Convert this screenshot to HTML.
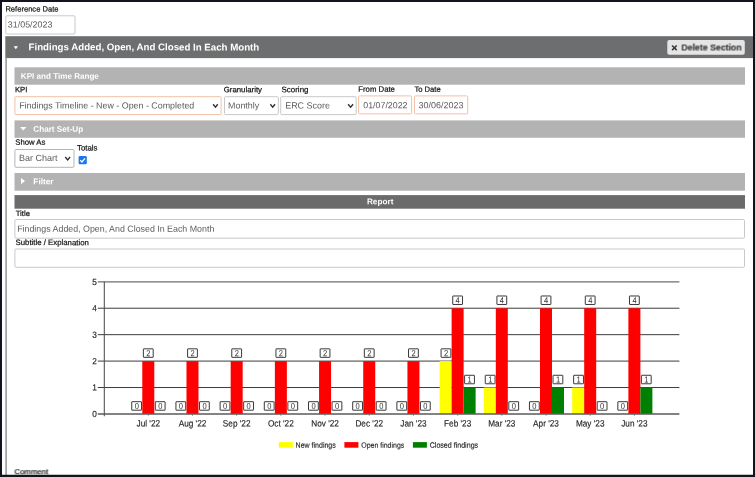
<!DOCTYPE html>
<html><head><meta charset="utf-8"><title>Report</title>
<style>
html,body{margin:0;padding:0;}
body{width:755px;height:477px;overflow:hidden;background:#fff;position:relative;font-family:"Liberation Sans",sans-serif;}
svg{position:absolute;left:0;top:0;display:block}
</style></head><body>
<svg width="755" height="477" viewBox="0 0 755 477" font-family="Liberation Sans, sans-serif">
<defs><filter id="gf" x="0" y="0" width="755" height="477" filterUnits="userSpaceOnUse" color-interpolation-filters="sRGB"><feColorMatrix type="matrix" values="1 0 0 0 0 0 1 0 0 0 0 0 1 0 0 0 0 0 1 0"/></filter></defs>
<rect x="5.80" y="15.80" width="69.20" height="18.20" fill="#fff" stroke="#c9c9c9" stroke-width="1.0" rx="1.0"/>
<rect x="5.30" y="36.20" width="748.20" height="21.90" fill="#6d6e6f"/>
<rect x="5.30" y="57.50" width="1.60" height="419.50" fill="#9a9a9a"/>
<path d="M13.70 46.20H18.00L15.85 49.20Z" fill="#fff"/>
<rect x="667.30" y="40.00" width="77.50" height="14.80" fill="#e5e5e5" rx="2"/>
<path d="M672.1 45.5L676.7 50.1M676.7 45.5L672.1 50.1" stroke="#3a3a3a" stroke-width="1.6"/>
<rect x="14.50" y="67.30" width="730.50" height="17.40" fill="#b3b3b3"/>
<rect x="14.90" y="96.70" width="206.20" height="17.90" fill="#fff" stroke="#f3c0a6" stroke-width="1.0" rx="1.0"/>
<path d="M213.15 104.30L215.45 107.15L217.75 104.30" stroke="#303030" stroke-width="1.38" fill="none"/>
<rect x="224.50" y="96.70" width="53.80" height="17.90" fill="#fff" stroke="#c9c9c9" stroke-width="1.0" rx="1.0"/>
<path d="M270.35 104.30L272.70 107.15L275.05 104.30" stroke="#303030" stroke-width="1.38" fill="none"/>
<rect x="280.70" y="96.70" width="75.50" height="17.90" fill="#fff" stroke="#c9c9c9" stroke-width="1.0" rx="1.0"/>
<path d="M348.15 104.30L350.60 107.15L353.05 104.30" stroke="#303030" stroke-width="1.38" fill="none"/>
<rect x="358.60" y="95.90" width="53.00" height="18.00" fill="#fff" stroke="#f3c0a6" stroke-width="1.0" rx="1.0"/>
<rect x="414.50" y="95.90" width="53.20" height="18.00" fill="#fff" stroke="#f3c0a6" stroke-width="1.0" rx="1.0"/>
<rect x="14.50" y="120.40" width="730.50" height="17.40" fill="#b3b3b3"/>
<path d="M20.10 127.00H26.40L23.25 130.40Z" fill="#fff"/>
<rect x="14.90" y="149.50" width="59.10" height="17.80" fill="#fff" stroke="#b5b5b5" stroke-width="1.0" rx="1.0"/>
<path d="M65.25 157.00L67.65 159.85L70.05 157.00" stroke="#303030" stroke-width="1.38" fill="none"/>
<rect x="78.6" y="156.1" width="8.2" height="8.2" rx="1.3" fill="#1a77ee"/><path d="M80.3 160.3L81.95 161.95L85.0 158.3" stroke="#fff" stroke-width="1.3" fill="none"/>
<rect x="14.50" y="173.00" width="730.50" height="17.70" fill="#b3b3b3"/>
<path d="M21.00 178.00L25.00 181.10L21.00 184.20Z" fill="#fff"/>
<rect x="14.50" y="195.10" width="730.50" height="13.60" fill="#6b6b6b"/>
<rect x="14.90" y="219.50" width="729.60" height="18.70" fill="#fff" stroke="#c9c9c9" stroke-width="1.0" rx="1.0"/>
<rect x="14.90" y="249.00" width="729.60" height="18.30" fill="#fff" stroke="#c9c9c9" stroke-width="1.0" rx="1.0"/>
<g filter="url(#gf)">
<line x1="97.8" y1="387.52" x2="679.40" y2="387.52" stroke="#262626" stroke-width="0.9"/>
<line x1="97.8" y1="361.09" x2="679.40" y2="361.09" stroke="#262626" stroke-width="0.9"/>
<line x1="97.8" y1="334.66" x2="679.40" y2="334.66" stroke="#262626" stroke-width="0.9"/>
<line x1="97.8" y1="308.23" x2="679.40" y2="308.23" stroke="#262626" stroke-width="0.9"/>
<line x1="97.8" y1="281.80" x2="679.40" y2="281.80" stroke="#6e6e6e" stroke-width="1.3"/>
<rect x="131.74" y="401.70" width="9.8" height="8.5" rx="0.3" fill="#fff" stroke="#2e2e2e" stroke-width="0.95"/><text transform="matrix(0.87,0.0005,0,1,136.74,409.05)" font-size="8.7" text-anchor="middle" fill="#333">0</text>
<rect x="155.29" y="401.70" width="9.8" height="8.5" rx="0.3" fill="#fff" stroke="#2e2e2e" stroke-width="0.95"/><text transform="matrix(0.87,0.0005,0,1,160.29,409.05)" font-size="8.7" text-anchor="middle" fill="#333">0</text>
<rect x="175.93" y="401.70" width="9.8" height="8.5" rx="0.3" fill="#fff" stroke="#2e2e2e" stroke-width="0.95"/><text transform="matrix(0.87,0.0005,0,1,180.93,409.05)" font-size="8.7" text-anchor="middle" fill="#333">0</text>
<rect x="199.48" y="401.70" width="9.8" height="8.5" rx="0.3" fill="#fff" stroke="#2e2e2e" stroke-width="0.95"/><text transform="matrix(0.87,0.0005,0,1,204.48,409.05)" font-size="8.7" text-anchor="middle" fill="#333">0</text>
<rect x="220.12" y="401.70" width="9.8" height="8.5" rx="0.3" fill="#fff" stroke="#2e2e2e" stroke-width="0.95"/><text transform="matrix(0.87,0.0005,0,1,225.12,409.05)" font-size="8.7" text-anchor="middle" fill="#333">0</text>
<rect x="243.67" y="401.70" width="9.8" height="8.5" rx="0.3" fill="#fff" stroke="#2e2e2e" stroke-width="0.95"/><text transform="matrix(0.87,0.0005,0,1,248.67,409.05)" font-size="8.7" text-anchor="middle" fill="#333">0</text>
<rect x="264.31" y="401.70" width="9.8" height="8.5" rx="0.3" fill="#fff" stroke="#2e2e2e" stroke-width="0.95"/><text transform="matrix(0.87,0.0005,0,1,269.31,409.05)" font-size="8.7" text-anchor="middle" fill="#333">0</text>
<rect x="287.86" y="401.70" width="9.8" height="8.5" rx="0.3" fill="#fff" stroke="#2e2e2e" stroke-width="0.95"/><text transform="matrix(0.87,0.0005,0,1,292.86,409.05)" font-size="8.7" text-anchor="middle" fill="#333">0</text>
<rect x="308.50" y="401.70" width="9.8" height="8.5" rx="0.3" fill="#fff" stroke="#2e2e2e" stroke-width="0.95"/><text transform="matrix(0.87,0.0005,0,1,313.50,409.05)" font-size="8.7" text-anchor="middle" fill="#333">0</text>
<rect x="332.05" y="401.70" width="9.8" height="8.5" rx="0.3" fill="#fff" stroke="#2e2e2e" stroke-width="0.95"/><text transform="matrix(0.87,0.0005,0,1,337.05,409.05)" font-size="8.7" text-anchor="middle" fill="#333">0</text>
<rect x="352.69" y="401.70" width="9.8" height="8.5" rx="0.3" fill="#fff" stroke="#2e2e2e" stroke-width="0.95"/><text transform="matrix(0.87,0.0005,0,1,357.69,409.05)" font-size="8.7" text-anchor="middle" fill="#333">0</text>
<rect x="376.24" y="401.70" width="9.8" height="8.5" rx="0.3" fill="#fff" stroke="#2e2e2e" stroke-width="0.95"/><text transform="matrix(0.87,0.0005,0,1,381.24,409.05)" font-size="8.7" text-anchor="middle" fill="#333">0</text>
<rect x="396.88" y="401.70" width="9.8" height="8.5" rx="0.3" fill="#fff" stroke="#2e2e2e" stroke-width="0.95"/><text transform="matrix(0.87,0.0005,0,1,401.88,409.05)" font-size="8.7" text-anchor="middle" fill="#333">0</text>
<rect x="420.43" y="401.70" width="9.8" height="8.5" rx="0.3" fill="#fff" stroke="#2e2e2e" stroke-width="0.95"/><text transform="matrix(0.87,0.0005,0,1,425.43,409.05)" font-size="8.7" text-anchor="middle" fill="#333">0</text>
<rect x="441.07" y="348.84" width="9.8" height="8.5" rx="0.3" fill="#fff" stroke="#2e2e2e" stroke-width="0.95"/><text transform="matrix(0.87,0.0005,0,1,446.07,356.19)" font-size="8.7" text-anchor="middle" fill="#333">2</text>
<rect x="464.62" y="375.27" width="9.8" height="8.5" rx="0.3" fill="#fff" stroke="#2e2e2e" stroke-width="0.95"/><text transform="matrix(0.87,0.0005,0,1,469.62,382.62)" font-size="8.7" text-anchor="middle" fill="#333">1</text>
<rect x="485.26" y="375.27" width="9.8" height="8.5" rx="0.3" fill="#fff" stroke="#2e2e2e" stroke-width="0.95"/><text transform="matrix(0.87,0.0005,0,1,490.26,382.62)" font-size="8.7" text-anchor="middle" fill="#333">1</text>
<rect x="508.81" y="401.70" width="9.8" height="8.5" rx="0.3" fill="#fff" stroke="#2e2e2e" stroke-width="0.95"/><text transform="matrix(0.87,0.0005,0,1,513.81,409.05)" font-size="8.7" text-anchor="middle" fill="#333">0</text>
<rect x="529.45" y="401.70" width="9.8" height="8.5" rx="0.3" fill="#fff" stroke="#2e2e2e" stroke-width="0.95"/><text transform="matrix(0.87,0.0005,0,1,534.45,409.05)" font-size="8.7" text-anchor="middle" fill="#333">0</text>
<rect x="553.00" y="375.27" width="9.8" height="8.5" rx="0.3" fill="#fff" stroke="#2e2e2e" stroke-width="0.95"/><text transform="matrix(0.87,0.0005,0,1,558.00,382.62)" font-size="8.7" text-anchor="middle" fill="#333">1</text>
<rect x="573.64" y="375.27" width="9.8" height="8.5" rx="0.3" fill="#fff" stroke="#2e2e2e" stroke-width="0.95"/><text transform="matrix(0.87,0.0005,0,1,578.64,382.62)" font-size="8.7" text-anchor="middle" fill="#333">1</text>
<rect x="597.19" y="401.70" width="9.8" height="8.5" rx="0.3" fill="#fff" stroke="#2e2e2e" stroke-width="0.95"/><text transform="matrix(0.87,0.0005,0,1,602.19,409.05)" font-size="8.7" text-anchor="middle" fill="#333">0</text>
<rect x="617.83" y="401.70" width="9.8" height="8.5" rx="0.3" fill="#fff" stroke="#2e2e2e" stroke-width="0.95"/><text transform="matrix(0.87,0.0005,0,1,622.83,409.05)" font-size="8.7" text-anchor="middle" fill="#333">0</text>
<rect x="641.38" y="375.27" width="9.8" height="8.5" rx="0.3" fill="#fff" stroke="#2e2e2e" stroke-width="0.95"/><text transform="matrix(0.87,0.0005,0,1,646.38,382.62)" font-size="8.7" text-anchor="middle" fill="#333">1</text>
<rect x="142.29" y="361.09" width="12.0" height="52.86" fill="#ff0000"/>
<rect x="186.48" y="361.09" width="12.0" height="52.86" fill="#ff0000"/>
<rect x="230.67" y="361.09" width="12.0" height="52.86" fill="#ff0000"/>
<rect x="274.86" y="361.09" width="12.0" height="52.86" fill="#ff0000"/>
<rect x="319.05" y="361.09" width="12.0" height="52.86" fill="#ff0000"/>
<rect x="363.24" y="361.09" width="12.0" height="52.86" fill="#ff0000"/>
<rect x="407.43" y="361.09" width="12.0" height="52.86" fill="#ff0000"/>
<rect x="439.62" y="361.09" width="12.0" height="52.86" fill="#ffff00"/>
<rect x="451.62" y="308.23" width="12.0" height="105.72" fill="#ff0000"/>
<rect x="463.62" y="387.52" width="12.0" height="26.43" fill="#008000"/>
<rect x="483.81" y="387.52" width="12.0" height="26.43" fill="#ffff00"/>
<rect x="495.81" y="308.23" width="12.0" height="105.72" fill="#ff0000"/>
<rect x="540.00" y="308.23" width="12.0" height="105.72" fill="#ff0000"/>
<rect x="552.00" y="387.52" width="12.0" height="26.43" fill="#008000"/>
<rect x="572.19" y="387.52" width="12.0" height="26.43" fill="#ffff00"/>
<rect x="584.19" y="308.23" width="12.0" height="105.72" fill="#ff0000"/>
<rect x="628.38" y="308.23" width="12.0" height="105.72" fill="#ff0000"/>
<rect x="640.38" y="387.52" width="12.0" height="26.43" fill="#008000"/>
<rect x="143.39" y="348.84" width="9.8" height="8.5" rx="0.3" fill="#fff" stroke="#2e2e2e" stroke-width="0.95"/><text transform="matrix(0.87,0.0005,0,1,148.39,356.19)" font-size="8.7" text-anchor="middle" fill="#333">2</text>
<rect x="187.58" y="348.84" width="9.8" height="8.5" rx="0.3" fill="#fff" stroke="#2e2e2e" stroke-width="0.95"/><text transform="matrix(0.87,0.0005,0,1,192.58,356.19)" font-size="8.7" text-anchor="middle" fill="#333">2</text>
<rect x="231.77" y="348.84" width="9.8" height="8.5" rx="0.3" fill="#fff" stroke="#2e2e2e" stroke-width="0.95"/><text transform="matrix(0.87,0.0005,0,1,236.77,356.19)" font-size="8.7" text-anchor="middle" fill="#333">2</text>
<rect x="275.96" y="348.84" width="9.8" height="8.5" rx="0.3" fill="#fff" stroke="#2e2e2e" stroke-width="0.95"/><text transform="matrix(0.87,0.0005,0,1,280.96,356.19)" font-size="8.7" text-anchor="middle" fill="#333">2</text>
<rect x="320.15" y="348.84" width="9.8" height="8.5" rx="0.3" fill="#fff" stroke="#2e2e2e" stroke-width="0.95"/><text transform="matrix(0.87,0.0005,0,1,325.15,356.19)" font-size="8.7" text-anchor="middle" fill="#333">2</text>
<rect x="364.34" y="348.84" width="9.8" height="8.5" rx="0.3" fill="#fff" stroke="#2e2e2e" stroke-width="0.95"/><text transform="matrix(0.87,0.0005,0,1,369.34,356.19)" font-size="8.7" text-anchor="middle" fill="#333">2</text>
<rect x="408.53" y="348.84" width="9.8" height="8.5" rx="0.3" fill="#fff" stroke="#2e2e2e" stroke-width="0.95"/><text transform="matrix(0.87,0.0005,0,1,413.53,356.19)" font-size="8.7" text-anchor="middle" fill="#333">2</text>
<rect x="452.72" y="295.98" width="9.8" height="8.5" rx="0.3" fill="#fff" stroke="#2e2e2e" stroke-width="0.95"/><text transform="matrix(0.87,0.0005,0,1,457.72,303.33)" font-size="8.7" text-anchor="middle" fill="#333">4</text>
<rect x="496.91" y="295.98" width="9.8" height="8.5" rx="0.3" fill="#fff" stroke="#2e2e2e" stroke-width="0.95"/><text transform="matrix(0.87,0.0005,0,1,501.91,303.33)" font-size="8.7" text-anchor="middle" fill="#333">4</text>
<rect x="541.10" y="295.98" width="9.8" height="8.5" rx="0.3" fill="#fff" stroke="#2e2e2e" stroke-width="0.95"/><text transform="matrix(0.87,0.0005,0,1,546.10,303.33)" font-size="8.7" text-anchor="middle" fill="#333">4</text>
<rect x="585.29" y="295.98" width="9.8" height="8.5" rx="0.3" fill="#fff" stroke="#2e2e2e" stroke-width="0.95"/><text transform="matrix(0.87,0.0005,0,1,590.29,303.33)" font-size="8.7" text-anchor="middle" fill="#333">4</text>
<rect x="629.48" y="295.98" width="9.8" height="8.5" rx="0.3" fill="#fff" stroke="#2e2e2e" stroke-width="0.95"/><text transform="matrix(0.87,0.0005,0,1,634.48,303.33)" font-size="8.7" text-anchor="middle" fill="#333">4</text>
<line x1="104.3" y1="281.80" x2="104.3" y2="416.34999999999997" stroke="#4c4c4c" stroke-width="1.05"/>
<line x1="97.8" y1="413.95" x2="679.40" y2="413.95" stroke="#5a5a5a" stroke-width="1.4"/>
<line x1="148.29" y1="413.95" x2="148.29" y2="415.84999999999997" stroke="#777" stroke-width="0.8"/>
<text transform="matrix(0.90,0.0005,0,1,148.29,426.45)" font-size="9.16" text-anchor="middle" fill="#242424" stroke="#242424" stroke-width="0.15">Jul '22</text>
<line x1="192.48" y1="413.95" x2="192.48" y2="415.84999999999997" stroke="#777" stroke-width="0.8"/>
<text transform="matrix(0.90,0.0005,0,1,192.48,426.45)" font-size="9.16" text-anchor="middle" fill="#242424" stroke="#242424" stroke-width="0.15">Aug '22</text>
<line x1="236.67" y1="413.95" x2="236.67" y2="415.84999999999997" stroke="#777" stroke-width="0.8"/>
<text transform="matrix(0.90,0.0005,0,1,236.67,426.45)" font-size="9.16" text-anchor="middle" fill="#242424" stroke="#242424" stroke-width="0.15">Sep '22</text>
<line x1="280.86" y1="413.95" x2="280.86" y2="415.84999999999997" stroke="#777" stroke-width="0.8"/>
<text transform="matrix(0.90,0.0005,0,1,280.86,426.45)" font-size="9.16" text-anchor="middle" fill="#242424" stroke="#242424" stroke-width="0.15">Oct '22</text>
<line x1="325.05" y1="413.95" x2="325.05" y2="415.84999999999997" stroke="#777" stroke-width="0.8"/>
<text transform="matrix(0.90,0.0005,0,1,325.05,426.45)" font-size="9.16" text-anchor="middle" fill="#242424" stroke="#242424" stroke-width="0.15">Nov '22</text>
<line x1="369.24" y1="413.95" x2="369.24" y2="415.84999999999997" stroke="#777" stroke-width="0.8"/>
<text transform="matrix(0.90,0.0005,0,1,369.24,426.45)" font-size="9.16" text-anchor="middle" fill="#242424" stroke="#242424" stroke-width="0.15">Dec '22</text>
<line x1="413.43" y1="413.95" x2="413.43" y2="415.84999999999997" stroke="#777" stroke-width="0.8"/>
<text transform="matrix(0.90,0.0005,0,1,413.43,426.45)" font-size="9.16" text-anchor="middle" fill="#242424" stroke="#242424" stroke-width="0.15">Jan '23</text>
<line x1="457.62" y1="413.95" x2="457.62" y2="415.84999999999997" stroke="#777" stroke-width="0.8"/>
<text transform="matrix(0.90,0.0005,0,1,457.62,426.45)" font-size="9.16" text-anchor="middle" fill="#242424" stroke="#242424" stroke-width="0.15">Feb '23</text>
<line x1="501.81" y1="413.95" x2="501.81" y2="415.84999999999997" stroke="#777" stroke-width="0.8"/>
<text transform="matrix(0.90,0.0005,0,1,501.81,426.45)" font-size="9.16" text-anchor="middle" fill="#242424" stroke="#242424" stroke-width="0.15">Mar '23</text>
<line x1="546.00" y1="413.95" x2="546.00" y2="415.84999999999997" stroke="#777" stroke-width="0.8"/>
<text transform="matrix(0.90,0.0005,0,1,546.00,426.45)" font-size="9.16" text-anchor="middle" fill="#242424" stroke="#242424" stroke-width="0.15">Apr '23</text>
<line x1="590.19" y1="413.95" x2="590.19" y2="415.84999999999997" stroke="#777" stroke-width="0.8"/>
<text transform="matrix(0.90,0.0005,0,1,590.19,426.45)" font-size="9.16" text-anchor="middle" fill="#242424" stroke="#242424" stroke-width="0.15">May '23</text>
<line x1="634.38" y1="413.95" x2="634.38" y2="415.84999999999997" stroke="#777" stroke-width="0.8"/>
<text transform="matrix(0.90,0.0005,0,1,634.38,426.45)" font-size="9.16" text-anchor="middle" fill="#242424" stroke="#242424" stroke-width="0.15">Jun '23</text>
<text transform="matrix(0.93,0.0005,0,1,96.8,417.05)" font-size="8.9" text-anchor="end" fill="#262626" stroke="#262626" stroke-width="0.15">0</text>
<text transform="matrix(0.93,0.0005,0,1,96.8,390.62)" font-size="8.9" text-anchor="end" fill="#262626" stroke="#262626" stroke-width="0.15">1</text>
<text transform="matrix(0.93,0.0005,0,1,96.8,364.19)" font-size="8.9" text-anchor="end" fill="#262626" stroke="#262626" stroke-width="0.15">2</text>
<text transform="matrix(0.93,0.0005,0,1,96.8,337.76)" font-size="8.9" text-anchor="end" fill="#262626" stroke="#262626" stroke-width="0.15">3</text>
<text transform="matrix(0.93,0.0005,0,1,96.8,311.33)" font-size="8.9" text-anchor="end" fill="#262626" stroke="#262626" stroke-width="0.15">4</text>
<text transform="matrix(0.93,0.0005,0,1,96.8,284.90)" font-size="8.9" text-anchor="end" fill="#262626" stroke="#262626" stroke-width="0.15">5</text>
<rect x="278.8" y="442.1" width="14.0" height="5.6" fill="#ffff00"/>
<text transform="matrix(0.91,0.0005,0,1,295.6,447.7)" font-size="7.73" fill="#242424" stroke="#242424" stroke-width="0.15">New findings</text>
<rect x="344.4" y="442.1" width="14.0" height="5.6" fill="#ff0000"/>
<text transform="matrix(0.91,0.0005,0,1,361.2,447.7)" font-size="7.67" fill="#242424" stroke="#242424" stroke-width="0.15">Open findings</text>
<rect x="412.9" y="442.1" width="14.0" height="5.6" fill="#008000"/>
<text transform="matrix(0.91,0.0005,0,1,429.7,447.7)" font-size="7.80" fill="#242424" stroke="#242424" stroke-width="0.15">Closed findings</text>
<text transform="matrix(1.0000,0.0005,0,1,5.38,11.60)" font-size="7.59" fill="#141414" stroke="#141414" stroke-width="0.22">Reference Date</text>
<text transform="matrix(1.0000,0.0005,0,1,7.86,27.40)" font-size="8.9" fill="#5c5c5c">31/05/2023</text>
<text transform="matrix(1.0000,0.0005,0,1,28.55,50.30)" font-size="9.69" font-weight="bold" fill="#fff">Findings Added, Open, And Closed In Each Month</text>
<text transform="matrix(1.0000,0.0005,0,1,681.41,50.50)" font-size="8.75" font-weight="bold" fill="#3a3a3a" stroke="#3a3a3a" stroke-width="0.15">Delete Section</text>
<text transform="matrix(1.0000,0.0005,0,1,20.86,78.70)" font-size="8.08" font-weight="bold" fill="#fff">KPI and Time Range</text>
<text transform="matrix(1.0000,0.0005,0,1,14.97,92.20)" font-size="7.72" fill="#141414" stroke="#141414" stroke-width="0.22">KPI</text>
<text transform="matrix(1.0000,0.0005,0,1,19.17,108.40)" font-size="8.88" fill="#5c5c5c">Findings Timeline - New - Open - Completed</text>
<text transform="matrix(1.0000,0.0005,0,1,223.71,92.30)" font-size="7.83" fill="#141414" stroke="#141414" stroke-width="0.22">Granularity</text>
<text transform="matrix(1.0000,0.0005,0,1,228.07,108.40)" font-size="8.9" fill="#5c5c5c">Monthly</text>
<text transform="matrix(1.0000,0.0005,0,1,281.44,92.30)" font-size="7.99" fill="#141414" stroke="#141414" stroke-width="0.22">Scoring</text>
<text transform="matrix(1.0000,0.0005,0,1,285.17,108.40)" font-size="8.94" fill="#5c5c5c">ERC Score</text>
<text transform="matrix(1.0000,0.0005,0,1,358.26,91.70)" font-size="7.77" fill="#141414" stroke="#141414" stroke-width="0.22">From Date</text>
<text transform="matrix(1.0000,0.0005,0,1,363.25,108.30)" font-size="8.85" fill="#5c5c5c">01/07/2022</text>
<text transform="matrix(1.0000,0.0005,0,1,414.43,91.70)" font-size="7.63" fill="#141414" stroke="#141414" stroke-width="0.22">To Date</text>
<text transform="matrix(1.0000,0.0005,0,1,418.56,108.30)" font-size="8.98" fill="#5c5c5c">30/06/2023</text>
<text transform="matrix(1.0000,0.0005,0,1,33.27,131.80)" font-size="8.16" font-weight="bold" fill="#fff">Chart Set-Up</text>
<text transform="matrix(1.0000,0.0005,0,1,15.25,144.80)" font-size="7.74" fill="#141414" stroke="#141414" stroke-width="0.22">Show As</text>
<text transform="matrix(1.0000,0.0005,0,1,18.96,160.90)" font-size="9.0" fill="#5c5c5c">Bar Chart</text>
<text transform="matrix(1.0000,0.0005,0,1,77.02,150.40)" font-size="7.83" fill="#141414" stroke="#141414" stroke-width="0.22">Totals</text>
<text transform="matrix(1.0000,0.0005,0,1,33.35,184.35)" font-size="8.25" font-weight="bold" fill="#fff">Filter</text>
<text transform="matrix(1.0000,0.0005,0,1,366.95,204.30)" font-size="8.21" font-weight="bold" fill="#fff">Report</text>
<text transform="matrix(1.0000,0.0005,0,1,15.73,216.00)" font-size="7.67" fill="#141414" stroke="#141414" stroke-width="0.22">Title</text>
<text transform="matrix(1.0000,0.0005,0,1,17.17,231.70)" font-size="8.86" fill="#5c5c5c">Findings Added, Open, And Closed In Each Month</text>
<text transform="matrix(1.0000,0.0005,0,1,15.55,245.10)" font-size="7.8" fill="#141414" stroke="#141414" stroke-width="0.22">Subtitle / Explanation</text>
<text transform="matrix(1.0000,0.0005,0,1,14.40,474.20)" font-size="7.81" fill="#141414" stroke="#141414" stroke-width="0.22">Comment</text>
</g>
<path d="M0 0H755V477H0Z M2 2V474.8H753V2Z" fill="#11131d" fill-rule="evenodd"/>
</svg>
</body></html>
